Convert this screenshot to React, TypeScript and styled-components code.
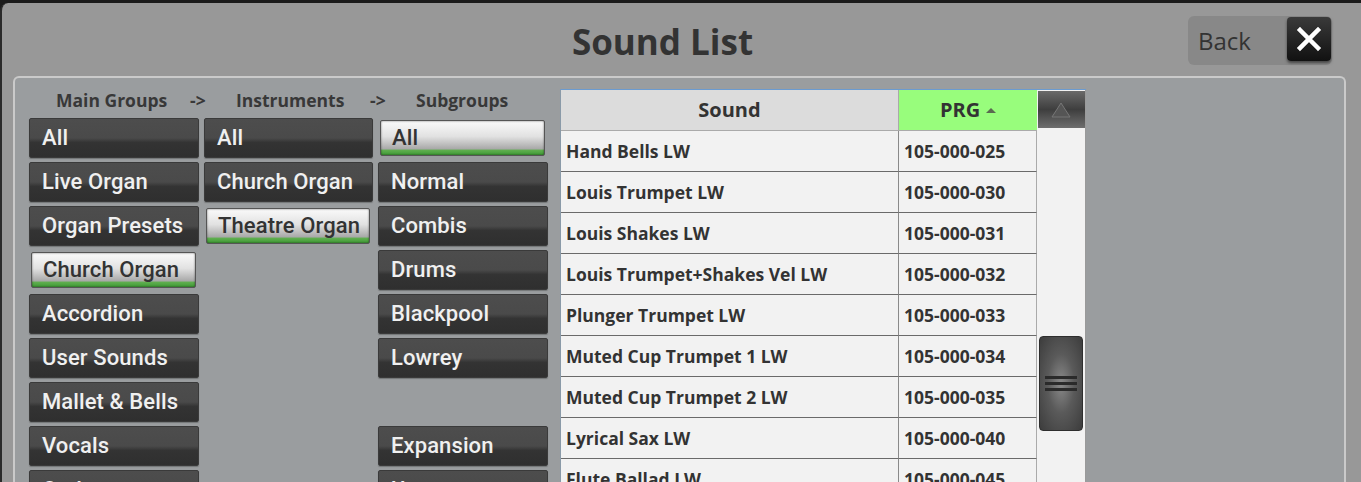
import styled, { createGlobalStyle } from "styled-components";

const Global = createGlobalStyle`
  html, body { margin: 0; padding: 0; background: #1b1b1b; }
  #root { height: 482px; overflow: hidden; }
`;

const Screen = styled.div`
  height: 479px;
  margin-top: 3px;
  background: #989898;
  border-left: 2px solid #2a2a2a;
  border-top-left-radius: 8px;
  display: flex;
  flex-direction: column;
  overflow: hidden;
`;

const TopBar = styled.header`
  height: 73px;
  flex: none;
  position: relative;
  display: flex;
  align-items: center;
  justify-content: center;
`;

const Title = styled.h1`
  margin: 0;
  margin-top: 4px;
  margin-right: 38px;
  font-family: "Open Sans", sans-serif;
  font-weight: 700;
  font-size: 35px;
  color: #333;
`;

const BackButton = styled.div`
  position: absolute;
  right: 29px;
  top: 13px;
  width: 144px;
  height: 49px;
  border-radius: 6px;
  background: #888;
  display: flex;
  align-items: center;
  justify-content: space-between;
  padding: 0 0 0 10px;
  box-sizing: border-box;
  font-family: "Open Sans", sans-serif;
  font-size: 24px;
  color: #333;
`;

const CloseBox = styled.div`
  width: 44px;
  height: 44px;
  margin-right: 1px;
  margin-top: -4px;
  border-radius: 4px;
  background: linear-gradient(#3a3a3a, #111);
  box-shadow: 0 2px 3px rgba(0, 0, 0, 0.5);
  display: flex;
  align-items: center;
  justify-content: center;
`;

const Panel = styled.main`
  flex: 1;
  margin-left: 11px;
  width: 1333px;
  border: 2px solid #cacaca;
  border-bottom: none;
  border-radius: 6px 6px 0 0;
  background: #9a9d9f;
  display: flex;
  padding: 11px 0 0 14px;
  box-sizing: border-box;
`;

const Groups = styled.section`
  width: 520px;
  flex: none;
`;

const Labels = styled.div`
  display: grid;
  grid-template-columns: 134px 46px 134px 46px auto;
  padding-left: 27px;
  height: 29px;
  font-family: "Open Sans", sans-serif;
  font-weight: 700;
  font-size: 17.5px;
  line-height: 22px;
  color: #383838;
`;

const ButtonGrid = styled.div`
  display: grid;
  grid-template-columns: 170px 169px 170px;
  grid-auto-rows: 40px;
  column-gap: 5px;
  row-gap: 4px;
`;

const GroupButton = styled.div<{ $active?: boolean }>`
  box-sizing: border-box;
  border-radius: 2px;
  padding-left: 12px;
  display: flex;
  align-items: center;
  white-space: nowrap;
  font-family: "Roboto", sans-serif;
  font-weight: 500;
  font-size: 22px;
  letter-spacing: 0.1px;
  padding-bottom: 2px;
  ${(p) =>
    p.$active
      ? `
    margin: 2px 3px 2px 2px;
    padding-left: 11px;
    color: #333;
    border: 1px solid #555;
    background: linear-gradient(#fafafa 0%, #e2e2e2 45%, #a9a9a9 82%, #5fae4f 86%, #3f9a35 100%);
    box-shadow: inset 0 0 2px rgba(0,0,0,0.6);
  `
      : `
    color: #f0f0f0;
    border: 1px solid #3a3a3a;
    background: linear-gradient(#4d4d4d 0%, #4a4a4a 50%, #333 62%, #2f2f2f 100%);
    box-shadow: 0 1px 1px rgba(0,0,0,0.25);
  `}
`;

const Gap = styled.div``;

const TableWrap = styled.section`
  margin-left: 11px;
  display: flex;
  border-top: 1px solid #6a9bd1;
  border-left: 1px solid #8a9aa8;
  height: 400px;
  background: #f2f2f2;
`;

const Table = styled.div`
  width: 476px;
  display: grid;
  grid-template-columns: 338px 138px;
  grid-auto-rows: 41px;
  font-family: "Open Sans", sans-serif;
  font-weight: 700;
  color: #333;
`;

const HeadCell = styled.div<{ $green?: boolean }>`
  background: ${(p) => (p.$green ? "#98fd7c" : "#dcdcdc")};
  border-bottom: 1px solid #aaa;
  border-right: ${(p) => (p.$green ? "none" : "1px solid #aaa")};
  display: flex;
  align-items: center;
  justify-content: center;
  font-size: 20px;
  gap: 6px;
  padding-bottom: 1px;
`;

const Cell = styled.div<{ $last?: boolean }>`
  border-bottom: 1px solid #6a6a6a;
  border-right: ${(p) => (p.$last ? "1px solid #aaa" : "1px solid #8a8a8a")};
  display: flex;
  align-items: center;
  padding-left: 5px;
  font-size: 17.5px;
`;

const Caret = styled.span`
  width: 0;
  height: 0;
  border-left: 5px solid transparent;
  border-right: 5px solid transparent;
  border-bottom: 5px solid #5a6a50;
  margin-top: 2px;
`;

const ScrollCol = styled.div`
  width: 48px;
  display: flex;
  flex-direction: column;
  align-items: center;
  background: #f2f2f2;
  border-right: 1px solid #9a9a9a;
`;

const ScrollUp = styled.div`
  width: 47px;
  height: 37px;
  margin-top: 1px;
  background: linear-gradient(#6a6a6a, #3e3e3e 50%, #6e6e6e);
  display: flex;
  align-items: center;
  justify-content: center;
`;

const Thumb = styled.div`
  margin-top: 208px;
  width: 44px;
  height: 95px;
  border-radius: 4px;
  background: radial-gradient(ellipse at center, #8a8a8a 0%, #5a5a5a 45%, #3c3c3c 100%);
  border: 1px solid #2e2e2e;
  box-sizing: border-box;
  display: flex;
  flex-direction: column;
  align-items: center;
  justify-content: center;
  gap: 3px;
`;

const Grip = styled.span`
  width: 32px;
  height: 3px;
  background: #2a2a2a;
`;

const col1 = ["All", "Live Organ", "Organ Presets", "Church Organ", "Accordion", "User Sounds", "Mallet & Bells", "Vocals", "Orchestra"];
const col2 = ["All", "Church Organ", "Theatre Organ"];
const col3 = ["All", "Normal", "Combis", "Drums", "Blackpool", "Lowrey", "", "Expansion", "User"];

const sounds: [string, string][] = [
  ["Hand Bells LW", "105-000-025"],
  ["Louis Trumpet LW", "105-000-030"],
  ["Louis Shakes LW", "105-000-031"],
  ["Louis Trumpet+Shakes Vel LW", "105-000-032"],
  ["Plunger Trumpet LW", "105-000-033"],
  ["Muted Cup Trumpet 1 LW", "105-000-034"],
  ["Muted Cup Trumpet 2 LW", "105-000-035"],
  ["Lyrical Sax LW", "105-000-040"],
  ["Flute Ballad LW", "105-000-045"],
];

export default function App() {
  const cells = [];
  for (let r = 0; r < 9; r++) {
    const a = col1[r];
    const b = col2[r];
    const c = col3[r];
    cells.push(a ? <GroupButton key={"a" + r} $active={r === 3}>{a}</GroupButton> : <Gap key={"a" + r} />);
    cells.push(b ? <GroupButton key={"b" + r} $active={r === 2}>{b}</GroupButton> : <Gap key={"b" + r} />);
    cells.push(c ? <GroupButton key={"c" + r} $active={r === 0}>{c}</GroupButton> : <Gap key={"c" + r} />);
  }

  return (
    <>
      <Global />
      <Screen>
        <TopBar>
          <Title>Sound List</Title>
          <BackButton>
            Back
            <CloseBox>
              <svg width="26" height="26" viewBox="0 0 26 26">
                <path d="M4 4 L22 22 M22 4 L4 22" stroke="#fff" strokeWidth="4.5" strokeLinecap="square" />
              </svg>
            </CloseBox>
          </BackButton>
        </TopBar>
        <Panel>
          <Groups>
            <Labels>
              <span>Main Groups</span>
              <span>-&gt;</span>
              <span>Instruments</span>
              <span>-&gt;</span>
              <span>Subgroups</span>
            </Labels>
            <ButtonGrid>{cells}</ButtonGrid>
          </Groups>
          <TableWrap>
            <Table>
              <HeadCell>Sound</HeadCell>
              <HeadCell $green>
                PRG <Caret />
              </HeadCell>
              {sounds.map(([name, prg]) => [
                <Cell key={name}>{name}</Cell>,
                <Cell key={prg} $last>{prg}</Cell>,
              ])}
            </Table>
            <ScrollCol>
              <ScrollUp>
                <svg width="20" height="16" viewBox="0 0 20 16">
                  <path d="M10 1 L19 15 L1 15 Z" fill="#555" stroke="#777" strokeWidth="1" />
                </svg>
              </ScrollUp>
              <Thumb>
                <Grip />
                <Grip />
                <Grip />
              </Thumb>
            </ScrollCol>
          </TableWrap>
        </Panel>
      </Screen>
    </>
  );
}
